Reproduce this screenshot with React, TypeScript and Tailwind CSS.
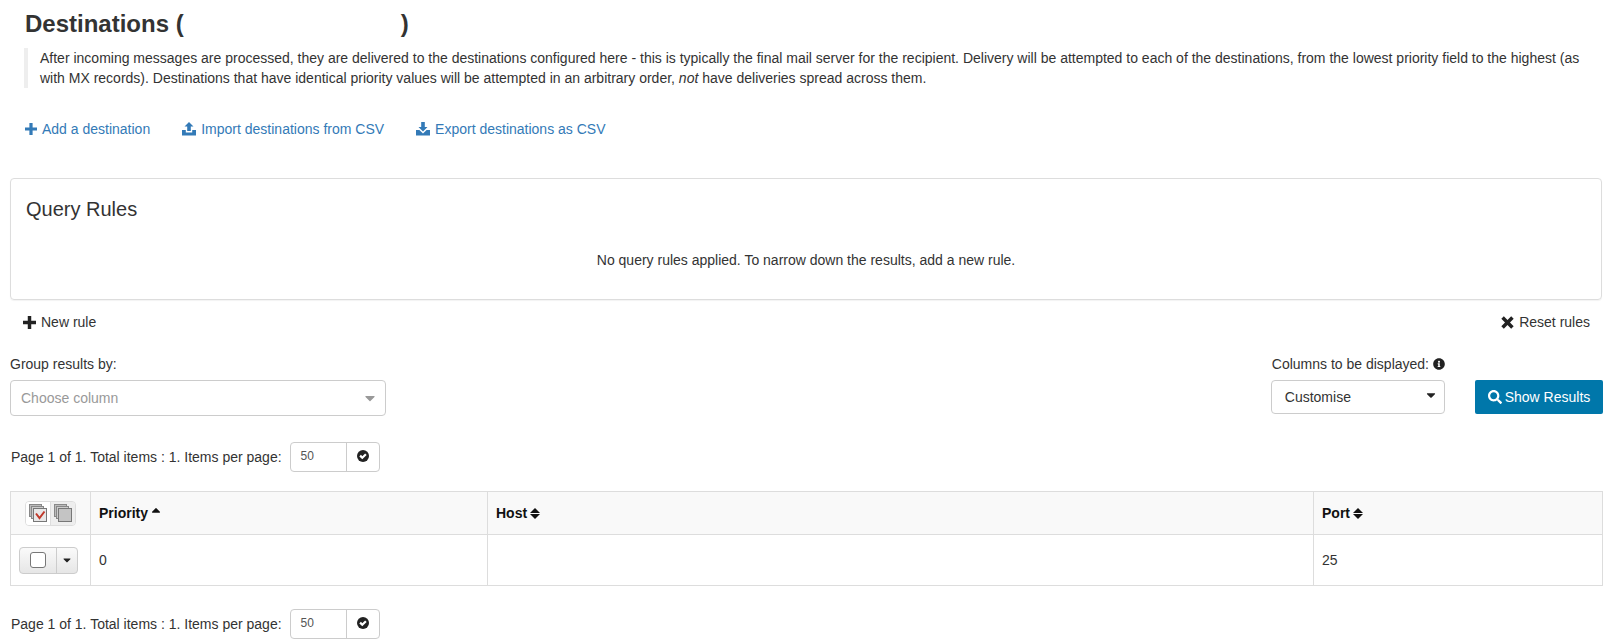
import React from 'react';
import { FaSearch, FaInfoCircle, FaCaretDown, FaCaretUp } from 'react-icons/fa';

const PlusIcon: React.FC<{ className?: string }> = ({ className }) => (
  <svg viewBox="0 0 12 12" className={`fill-current ${className ?? ''}`}>
    <path d="M4.4 0 H7.6 V4.4 H12 V7.6 H7.6 V12 H4.4 V7.6 H0 V4.4 H4.4 Z" />
  </svg>
);

const CrossIcon: React.FC<{ className?: string }> = ({ className }) => (
  <svg viewBox="0 0 12 12" className={`fill-current ${className ?? ''}`}>
    <path d="M2.6 0.3 L6 3.7 L9.4 0.3 L11.7 2.6 L8.3 6 L11.7 9.4 L9.4 11.7 L6 8.3 L2.6 11.7 L0.3 9.4 L3.7 6 L0.3 2.6 Z" />
  </svg>
);

const UploadIcon: React.FC = () => (
  <svg viewBox="0 0 14 14" className="w-[14px] h-[14px] fill-current">
    <path d="M7 0 L11.5 4.6 H8.8 V9 H5.2 V4.6 H2.5 Z" />
    <path d="M0 8 H3.8 V10.4 H10.2 V8 H14 V13.5 H0 Z" />
  </svg>
);

const DownloadIcon: React.FC = () => (
  <svg viewBox="0 0 14 14" className="w-[14px] h-[14px] fill-current">
    <path d="M5.2 0 H8.8 V5 H11.5 L7 9.6 L2.5 5 H5.2 Z" />
    <path d="M0 8 H3.4 L7 11.4 L10.6 8 H14 V13.5 H0 Z" />
  </svg>
);

const OkSign: React.FC = () => (
  <svg viewBox="0 0 12 12" className="w-3 h-3">
    <circle cx="6" cy="6" r="6" fill="#222" />
    <path d="M3.1 5.6 L5.3 7.8 L8.9 4.2" fill="none" stroke="#fff" strokeWidth="2.2" />
  </svg>
);

const SortBoth: React.FC = () => (
  <span className="inline-flex flex-col ml-[3px] align-middle -mt-[2px] text-[#111]">
    <svg viewBox="0 0 10 5" className="w-[10px] h-[5px] fill-current mb-[1px]"><path d="M5 0 L10 5 H0 Z" /></svg>
    <svg viewBox="0 0 10 5" className="w-[10px] h-[5px] fill-current"><path d="M5 5 L0 0 H10 Z" /></svg>
  </span>
);

const StackedBoxes: React.FC<{ checked?: boolean }> = ({ checked }) => (
  <svg viewBox="0 0 18 18" className="w-[18px] h-[18px]">
    <rect x="0.5" y="0.5" width="12" height="12" fill="#bbb" stroke="#888" />
    <rect x="2.5" y="2.5" width="12" height="12" fill="#ccc" stroke="#888" />
    <rect x="4.5" y="4.5" width="13" height="13" fill={checked ? '#e8e8e8' : '#c4c4c4'} stroke="#777" />
    {checked && <path d="M7 9.5 L10.5 14 L15.5 7.5" fill="none" stroke="#c0392b" strokeWidth="2" />}
  </svg>
);

const Pager: React.FC = () => (
  <div className="flex items-center h-[30px] text-[#333]">
    <span className="ml-px">Page 1 of 1. Total items : 1. Items per page:</span>
    <div className="flex ml-[8px] h-[30px] w-[90px] border border-[#ccc] rounded-[4px]">
      <span className="w-[56px] border-r border-[#ccc] text-xs pl-[10px] leading-[26px] text-[#555]">50</span>
      <span className="flex-1 flex items-center justify-center pb-[2px]"><OkSign /></span>
    </div>
  </div>
);

export default function App() {
  return (
    <div className="w-[1622px] h-[644px] overflow-hidden bg-white text-sm leading-5 text-[#333] font-['Liberation_Sans',Arial,sans-serif]">
      <div className="pl-[25px] pr-[20px]">
        <h1 className="pt-[9px] text-2xl leading-[30px] font-bold">
          Destinations (<span className="inline-block w-[217px]" />)
        </h1>
        <blockquote className="mt-[9px] border-l-4 border-[#eee] pl-[12px] -ml-[1px]">
          After incoming messages are processed, they are delivered to the destinations configured here - this is typically the final mail server for the recipient. Delivery will be attempted to each of the destinations, from the lowest priority field to the highest (as with MX records). Destinations that have identical priority values will be attempted in an arbitrary order, <em>not</em> have deliveries spread across them.
        </blockquote>
        <div className="mt-[31px] flex gap-[32px] text-[#337ab7]">
          <a className="flex items-center gap-[5px]"><PlusIcon className="w-3 h-3" />Add a destination</a>
          <a className="flex items-center gap-[5px]"><UploadIcon />Import destinations from CSV</a>
          <a className="flex items-center gap-[5px]"><DownloadIcon />Export destinations as CSV</a>
        </div>
      </div>

      <div className="ml-[10px] w-[1592px] mt-[39px]">
        <div className="h-[122px] border border-[#ddd] rounded-[4px] shadow-[0_1px_1px_rgba(0,0,0,0.05)] px-[15px] pt-[18px]">
          <h2 className="text-xl leading-6">Query Rules</h2>
          <p className="mt-[29px] text-center">No query rules applied. To narrow down the results, add a new rule.</p>
        </div>
        <div className="mt-[12px] flex justify-between pl-[13px] pr-[12px]">
          <span className="flex items-center gap-[5px]"><PlusIcon className="w-[13px] h-[13px] text-[#222]" />New rule</span>
          <span className="flex items-center gap-[5px]"><CrossIcon className="w-[13px] h-[13px] text-[#222]" />Reset rules</span>
        </div>
      </div>

      <div className="ml-[10px] w-[1593px] mt-[22px] flex justify-between">
        <div>
          <div className="leading-5">Group results by:</div>
          <div className="mt-[6px] w-[376px] h-[36px] border border-[#ccc] rounded-[4px] flex items-center justify-between pl-[10px] pr-[7px] text-[#999]">
            Choose column
            <FaCaretDown className="w-[16px] h-[16px] text-[#999]" />
          </div>
        </div>
        <div className="flex items-end gap-[30px] pb-[2px]">
          <div>
            <div className="flex items-center gap-[4px] ml-px mb-[6px]">Columns to be displayed: <FaInfoCircle className="w-3 h-3 text-[#222]" /></div>
            <div className="w-[174px] h-[34px] border border-[#ccc] rounded-[4px] flex items-center justify-between pl-[13px] pr-[6px]">
              Customise
              <FaCaretDown className="w-[14px] h-[14px] text-[#222] -mt-[4px]" />
            </div>
          </div>
          <button className="w-[128px] h-[34px] bg-[#0077aa] text-white rounded-[2px] flex items-center justify-center gap-[3px]">
            <FaSearch className="w-[14px] h-[14px]" />Show Results
          </button>
        </div>
      </div>

      <div className="ml-[10px] w-[1593px]">
        <div className="mt-[26px]"><Pager /></div>
        <table className="mt-[19px] w-full table-fixed border-collapse border border-[#ddd]">
          <thead>
            <tr className="h-[43px] bg-[#f9f9f9]">
              <th className="w-[80px] border border-[#ddd] p-0">
                <div className="ml-[14px] flex w-[51px] h-[25px] border border-[#ddd] rounded-[4px] overflow-hidden">
                  <span className="flex-1 flex items-center justify-center bg-white border-r border-[#ddd]"><StackedBoxes checked /></span>
                  <span className="flex-1 flex items-center justify-center bg-[#eee]"><StackedBoxes /></span>
                </div>
              </th>
              <th className="w-[397px] border border-[#ddd] px-2 text-left text-sm text-[#111]">
                Priority<FaCaretUp className="inline w-[14px] h-[14px] ml-px align-[1px]" />
              </th>
              <th className="w-[826px] border border-[#ddd] px-2 text-left text-sm text-[#111]">Host<SortBoth /></th>
              <th className="border border-[#ddd] px-2 text-left text-sm text-[#111]">Port<SortBoth /></th>
            </tr>
          </thead>
          <tbody>
            <tr className="h-[51px]">
              <td className="border border-[#ddd] p-0">
                <div className="ml-[8px] flex w-[59px] h-[27px] border border-[#ccc] rounded-[4px] bg-gradient-to-b from-[#fafafa] to-[#e6e6e6]">
                  <span className="w-[37px] flex items-center justify-center border-r border-[#ccc]">
                    <span className="w-[16px] h-[16px] bg-white border border-[#777] rounded-[3px]" />
                  </span>
                  <span className="flex-1 flex items-center justify-center"><FaCaretDown className="w-3 h-3 text-[#222]" /></span>
                </div>
              </td>
              <td className="border border-[#ddd] px-2">0</td>
              <td className="border border-[#ddd] px-2"></td>
              <td className="border border-[#ddd] px-2">25</td>
            </tr>
          </tbody>
        </table>
        <div className="mt-[23px]"><Pager /></div>
      </div>
    </div>
  );
}
